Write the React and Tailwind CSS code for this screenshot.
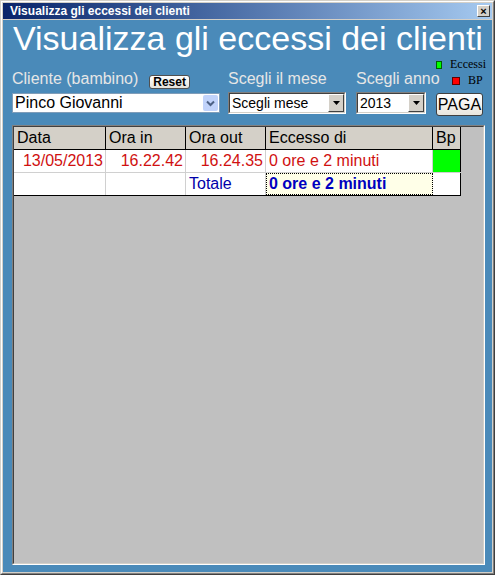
import React from 'react'

// Finestra classica stile Windows con tabella degli eccessi
function Chevron() {
  return (
    <svg width="9" height="7" viewBox="0 0 9 7">
      <path d="M1 1.5 L4.5 5 L8 1.5" fill="none" stroke="#4d6185" strokeWidth="2" />
    </svg>
  )
}

function Triangle() {
  return (
    <svg width="7" height="4" viewBox="0 0 7 4">
      <polygon points="0,0 7,0 3.5,4" fill="#000" />
    </svg>
  )
}

function ClassicSelect({ value, width }) {
  return (
    <div
      className={`flex h-[22px] border-t border-l border-[#808080] border-r border-b border-r-white border-b-white ${width}`}
    >
      <div className="flex flex-1 border-t border-l border-[#404040] border-r border-b border-r-[#d4d0c8] border-b-[#d4d0c8] bg-white">
        <span className="flex-1 pl-[2px] text-[14px] leading-[18px] text-black">{value}</span>
        <div className="flex w-[16px] items-center justify-center border-t border-l border-white border-r border-b border-r-[#404040] border-b-[#404040] bg-[#d4d0c8]">
          <Triangle />
        </div>
      </div>
    </div>
  )
}

const rowText = 'text-[16px] leading-[22px]'

export default function App() {
  return (
    <div className="h-[575px] w-[495px] border-t border-l border-[#d4d0c8] border-r border-b border-r-[#404040] border-b-[#404040] font-['Liberation_Sans',Arial,sans-serif]">
      <div className="flex h-full flex-col border-t border-l border-white border-r border-b border-r-[#808080] border-b-[#808080] bg-[#d4d0c8] p-[1px]">
        {/* barra del titolo */}
        <div className="flex h-[16px] items-center bg-gradient-to-r from-[#0a246a] to-[#a6caf0] pl-[7px] pr-[2px]">
          <span className="flex-1 text-[12px] leading-[14px] font-bold text-white">
            Visualizza gli eccessi dei clienti
          </span>
          <div className="flex h-[12px] w-[13px] items-center justify-center border-t border-l border-white border-r border-b border-r-[#404040] border-b-[#404040] bg-[#d4d0c8] text-[11px] leading-none font-bold text-black">
            ×
          </div>
        </div>

        {/* corpo */}
        <div className="mt-[1px] flex flex-1 flex-col bg-[#4a8ab9]">
          <h1 className="mt-[1px] pl-[10px] text-[34px] leading-[34px] text-white">
            Visualizza gli eccessi dei clienti
          </h1>

          <div className="mt-[1px] flex items-start pl-[9px]">
            {/* cliente */}
            <div className="mt-[14px] flex w-[208px] flex-col">
              <div className="flex items-start">
                <span className="text-[16px] leading-[18px] text-[#e6e6e6]">Cliente (bambino)</span>
                <button className="mt-[5px] ml-[11px] h-[14px] rounded-[3px] border border-[#505050] bg-gradient-to-b from-white to-[#e4e2da] px-[3px] text-[12px] leading-[12px] font-bold text-black">
                  Reset
                </button>
              </div>
              <div className="mt-[4px] flex h-[20px] border border-[#7f9db9] bg-white">
                <span className="flex-1 pl-[2px] text-[16px] leading-[18px] text-black">Pinco Giovanni</span>
                <div className="m-[1px] flex w-[15px] items-center justify-center rounded-[2px] bg-[#c1d3fb]">
                  <Chevron />
                </div>
              </div>
            </div>

            {/* mese */}
            <div className="mt-[14px] ml-[8px] flex w-[118px] flex-col">
              <span className="text-[16px] leading-[18px] text-[#e6e6e6]">Scegli il mese</span>
              <div className="mt-[4px]">
                <ClassicSelect value="Scegli mese" width="w-[118px]" />
              </div>
            </div>

            {/* anno */}
            <div className="mt-[14px] ml-[10px] flex w-[70px] flex-col">
              <span className="text-[16px] leading-[18px] whitespace-nowrap text-[#e6e6e6]">Scegli anno</span>
              <div className="mt-[4px]">
                <ClassicSelect value="2013" width="w-[70px]" />
              </div>
            </div>

            {/* legenda e paga */}
            <div className="ml-[10px] flex w-[50px] flex-col">
              <div className="mt-[3px] flex items-center">
                <span className="h-[8px] w-[8px] border border-[#006000] bg-[#00ff00]" />
                <span className="ml-[8px] font-['Liberation_Serif',serif] text-[12px] leading-[11px] text-black">
                  Eccessi
                </span>
              </div>
              <div className="mt-[5px] flex items-center pl-[16px]">
                <span className="h-[8px] w-[8px] border border-[#600000] bg-[#ff0000]" />
                <span className="ml-[8px] font-['Liberation_Serif',serif] text-[12px] leading-[11px] text-black">
                  BP
                </span>
              </div>
              <button className="mt-[7px] h-[23px] w-[47px] rounded-[3px] border border-[#404040] bg-gradient-to-b from-white to-[#e8e6de] text-[16px] leading-[20px] text-black">
                PAGA
              </button>
            </div>
          </div>

          {/* pannello tabella */}
          <div className="mt-[9px] mr-[7px] mb-[7px] ml-[9px] flex flex-1 border-t border-l border-[#808080] border-r border-b border-r-white border-b-white">
            <div className="flex-1 border-t border-l border-[#404040] border-r border-b border-r-[#d4d0c8] border-b-[#d4d0c8] bg-[#c0c0c0]">
              <div className="w-[447px] bg-white">
                <div className="flex h-[23px] border-b border-black bg-[#d4d0c8] text-black">
                  <div className={`w-[92px] border-r border-black pl-[3px] ${rowText}`}>Data</div>
                  <div className={`w-[80px] border-r border-black pl-[3px] ${rowText}`}>Ora in</div>
                  <div className={`w-[80px] border-r border-black pl-[3px] ${rowText}`}>Ora out</div>
                  <div className={`w-[167px] border-r border-black pl-[3px] ${rowText}`}>Eccesso di</div>
                  <div className={`w-[28px] border-r border-black pl-[3px] ${rowText}`}>Bp</div>
                </div>
                <div className="flex h-[23px] border-b border-[#d0d0d0] text-[#d01010]">
                  <div className={`w-[92px] border-r border-[#d0d0d0] pr-[2px] text-right ${rowText}`}>13/05/2013</div>
                  <div className={`w-[80px] border-r border-[#d0d0d0] pr-[2px] text-right ${rowText}`}>16.22.42</div>
                  <div className={`w-[80px] border-r border-[#d0d0d0] pr-[2px] text-right ${rowText}`}>16.24.35</div>
                  <div className={`w-[167px] border-r border-[#d0d0d0] pl-[3px] ${rowText}`}>0 ore e 2 minuti</div>
                  <div className="w-[28px] border-r border-black bg-[#00ff00]" />
                </div>
                <div className="flex h-[23px] border-b border-black text-[#0000aa]">
                  <div className="w-[92px] border-r border-[#d0d0d0]" />
                  <div className="w-[80px] border-r border-[#d0d0d0]" />
                  <div className={`w-[80px] border-r border-[#d0d0d0] pl-[3px] ${rowText}`}>Totale</div>
                  <div className="w-[167px] border border-dotted border-black bg-[#ffffe8] pl-[2px] text-[16px] leading-[20px] font-bold text-[#0000c0]">
                    0 ore e 2 minuti
                  </div>
                  <div className="w-[28px] border-r border-black" />
                </div>
              </div>
            </div>
          </div>
        </div>
      </div>
    </div>
  )
}
